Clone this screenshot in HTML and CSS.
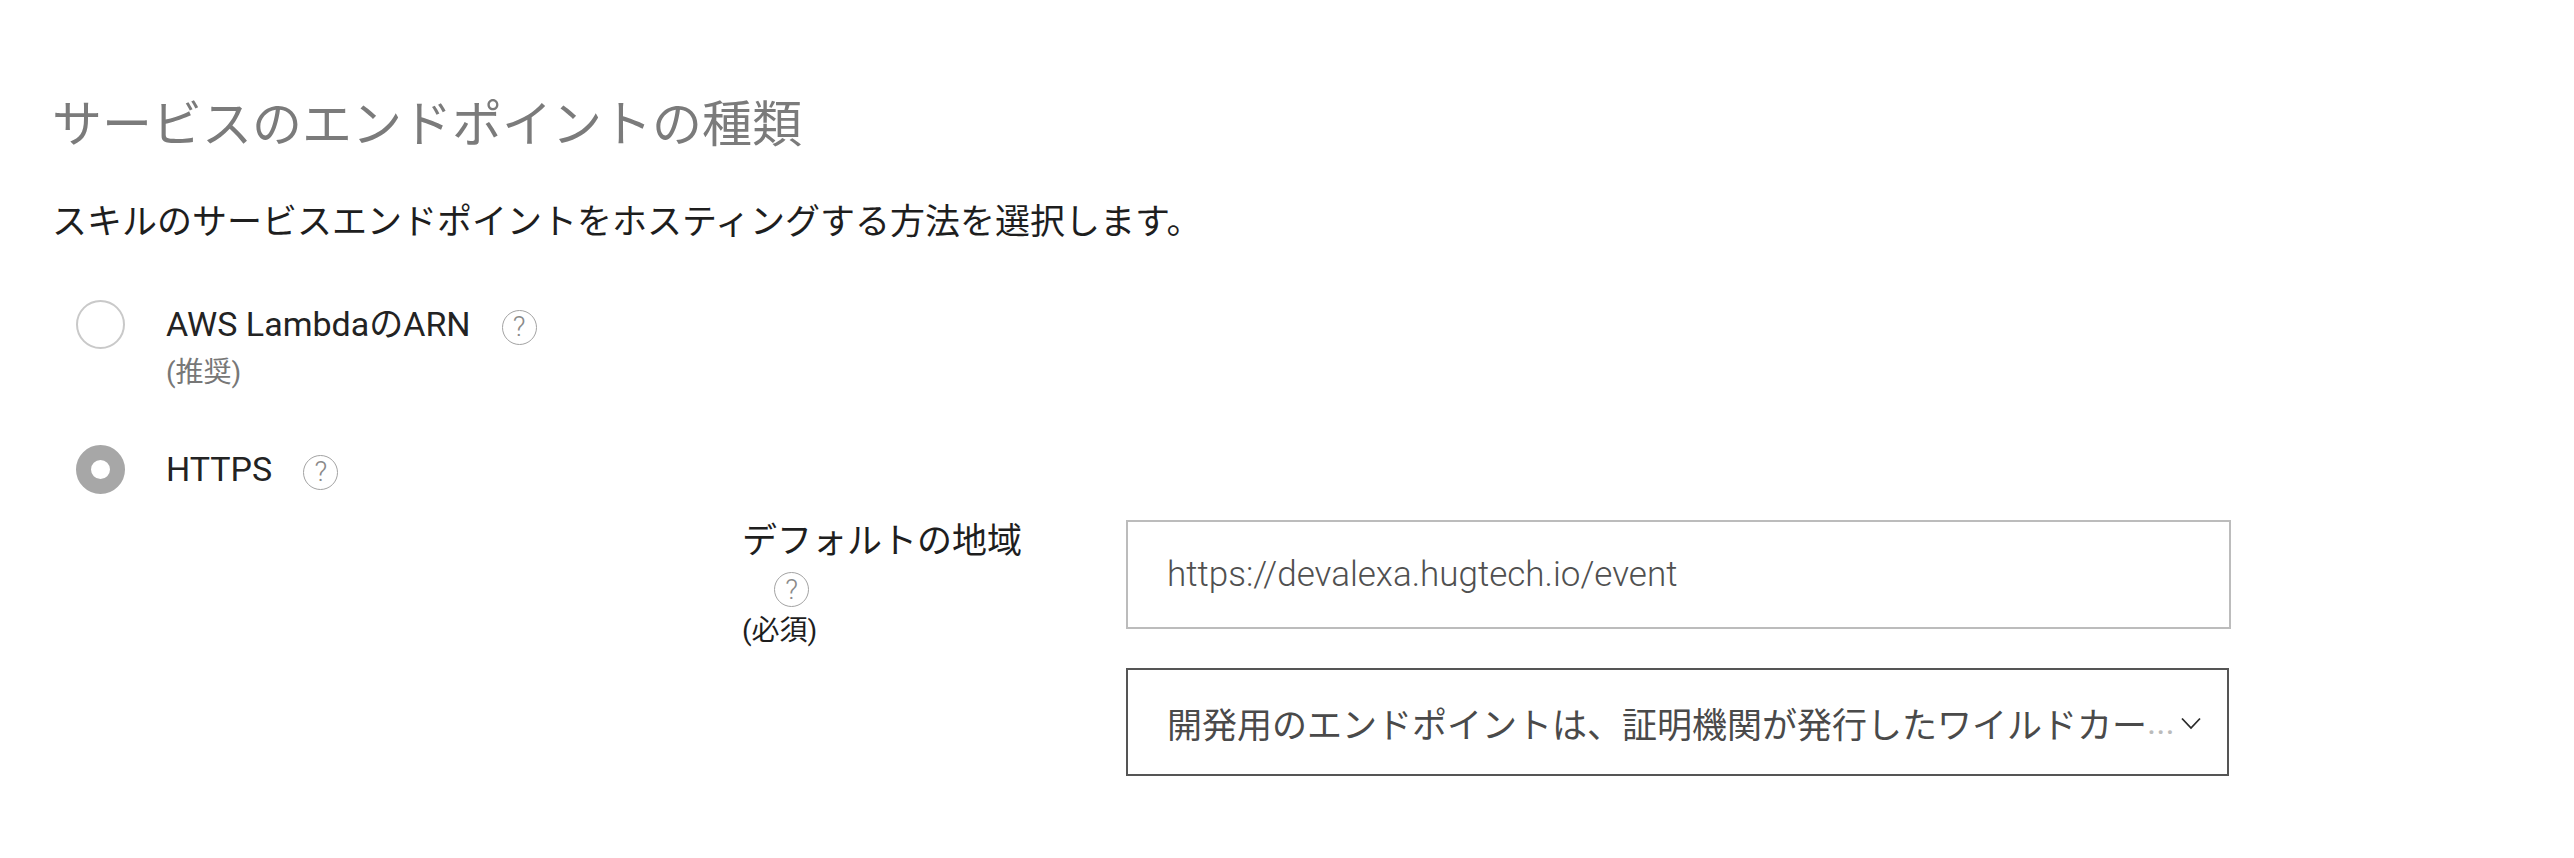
FILE: index.html
```html
<!DOCTYPE html>
<html lang="ja">
<head>
<meta charset="utf-8">
<title>サービスのエンドポイントの種類</title>
<link rel="stylesheet" href="styles.css">
</head>
<body>
<main class="page">
  <h1 class="title">サービスのエンドポイントの種類</h1>
  <p class="desc">スキルのサービスエンドポイントをホスティングする方法を選択します。</p>

  <div class="option">
    <span class="radio"></span>
    <div class="option-label">
      <div class="label-line">
        <span class="label-text">AWS LambdaのARN</span>
        <span class="help">?</span>
      </div>
      <div class="sub">(推奨)</div>
    </div>
  </div>

  <div class="option option-second">
    <span class="radio radio-checked"></span>
    <div class="option-label">
      <div class="label-line">
        <span class="label-text">HTTPS</span>
        <span class="help">?</span>
      </div>
    </div>
  </div>

  <div class="detail">
    <div class="field-label">
      <div class="field-name">デフォルトの地域</div>
      <span class="help help-block">?</span>
      <div class="required">(必須)</div>
    </div>
    <div class="controls">
      <div class="input">https://devalexa.hugtech.io/event</div>
      <div class="select">
        <span class="select-text">開発用のエンドポイントは、証明機関が発行したワイルドカー</span><span class="dots">...</span>
        <svg class="chevron" width="20" height="13" viewBox="0 0 20 13"><path d="M1 1.5 L10 11 L19 1.5" fill="none" stroke="#2a2a2a" stroke-width="1.8"/></svg>
      </div>
    </div>
  </div>
</main>
</body>
</html>
```

FILE: styles.css
```css
html, body {
  margin: 0;
  padding: 0;
  background: #ffffff;
}

body {
  font-family: "Roboto", "Noto Sans CJK JP", sans-serif;
  color: #232323;
}

.page {
  padding: 95px 0 40px 52px;
}

.title {
  margin: 0;
  font-family: "Roboto", "Noto Sans CJK JP", sans-serif;
  font-weight: 400;
  font-size: 50px;
  line-height: 60px;
  color: #7b7b7b;
}

.desc {
  margin: 44px 0 0 0;
  font-size: 35px;
  line-height: 48px;
  color: #1e1e1e;
}

.option {
  display: flex;
  align-items: flex-start;
  margin-top: 53px;
}

.option-second {
  margin-top: 54px;
}

.radio {
  box-sizing: border-box;
  width: 49px;
  height: 49px;
  border-radius: 50%;
  border: 2px solid #c9c9c9;
  background: #fff;
  margin-left: 24px;
  margin-right: 41px;
  flex: none;
}

.radio-checked {
  border: 15px solid #a7a7a7;
}

.option-label {
  display: flex;
  flex-direction: column;
}

.label-line {
  display: flex;
  align-items: center;
  height: 49px;
}

.label-text {
  font-size: 34px;
  line-height: 49px;
  color: #232323;
}

.help {
  box-sizing: border-box;
  display: inline-flex;
  align-items: center;
  justify-content: center;
  width: 35px;
  height: 35px;
  border: 1.5px solid #a3a3a3;
  border-radius: 50%;
  font-family: "Roboto", sans-serif;
  font-size: 28px;
  font-weight: 300;
  line-height: 1;
  color: #8a8a8a;
  margin-left: 31px;
  margin-top: 5px;
  flex: none;
}

.sub {
  margin-top: 6px;
  font-size: 28px;
  line-height: 36px;
  color: #777777;
}

.detail {
  display: grid;
  grid-template-columns: 384px 1105px;
  margin-top: 26px;
  margin-left: 690px;
}

.field-label {
  display: flex;
  flex-direction: column;
  align-items: flex-start;
}

.field-name {
  font-size: 35px;
  line-height: 44px;
  color: #1e1e1e;
}

.help-block {
  margin-left: 32px;
  margin-top: 8px;
}

.required {
  margin-top: 4px;
  font-size: 28px;
  line-height: 40px;
  color: #1e1e1e;
}

.controls {
  display: flex;
  flex-direction: column;
  gap: 39px;
}

.input {
  box-sizing: border-box;
  height: 109px;
  border: 2px solid #bcbcbc;
  padding: 0 39px;
  display: flex;
  align-items: center;
  font-size: 35px;
  font-weight: 300;
  color: #505050;
}

.select {
  box-sizing: border-box;
  width: 1103px;
  height: 108px;
  border: 2px solid #555555;
  padding: 0 16px 0 39px;
  display: flex;
  align-items: center;
  font-size: 35px;
  color: #4a4a4a;
  white-space: nowrap;
}

.select-text {
  flex: none;
}

.dots {
  flex: none;
  color: #bbbbbb;
}

.chevron {
  margin-left: 6px;
  margin-top: 2px;
  flex: none;
}
```
